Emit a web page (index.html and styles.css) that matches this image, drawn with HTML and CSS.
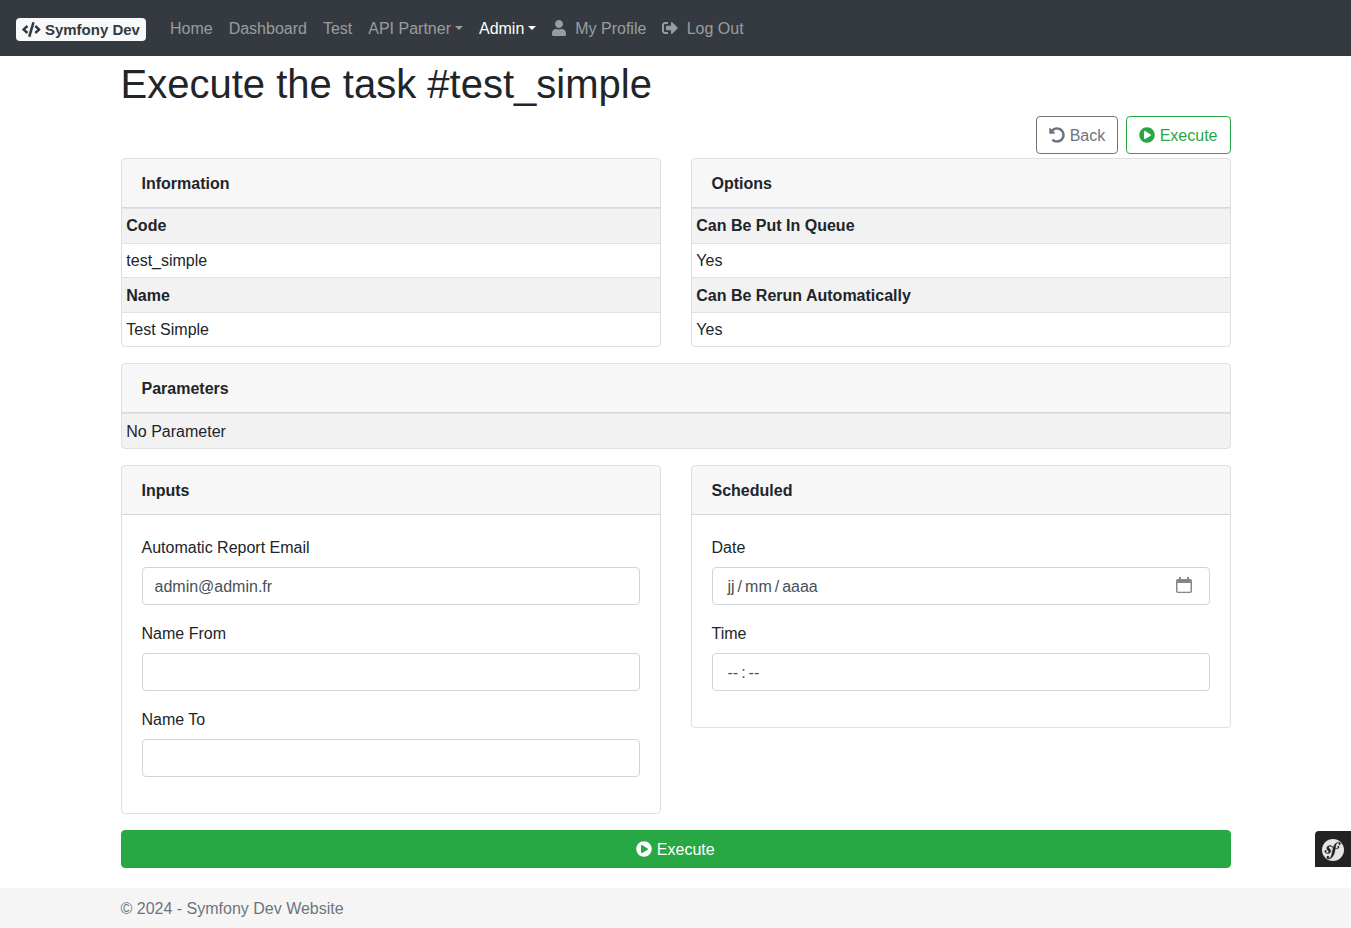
FILE: index.html
```html
<!DOCTYPE html>
<html lang="en">
<head>
<meta charset="utf-8">
<title>Execute the task #test_simple</title>
<link rel="stylesheet" href="styles.css">
</head>
<body>
<svg class="defs" width="0" height="0">
  <symbol id="code" viewBox="0 0 640 512"><path d="M278.9 511.5l-61-17.7c-6.4-1.8-10-8.5-8.2-14.9L346.2 8.7c1.8-6.4 8.5-10 14.9-8.2l61 17.7c6.4 1.8 10 8.5 8.2 14.9L293.8 503.3c-1.9 6.4-8.5 10.1-14.9 8.2zm-114-112.2l43.5-46.4c4.6-4.9 4.3-12.7-.8-17.2L117 256l90.6-79.7c5.1-4.5 5.5-12.3.8-17.2l-43.5-46.4c-4.5-4.8-12.1-5.1-17-.5L3.8 247.2c-5.1 4.7-5.1 12.8 0 17.5l144.1 135.1c4.9 4.6 12.5 4.4 17-.5zm327.2.6l144.1-135.1c5.1-4.7 5.1-12.8 0-17.5L492.1 112.1c-4.8-4.5-12.4-4.3-17 .5L431.6 159c-4.6 4.9-4.3 12.7.8 17.2L523 256l-90.6 79.7c-5.1 4.5-5.5 12.3-.8 17.2l43.5 46.4c4.5 4.9 12.1 5.1 17 .6z"/></symbol>
  <symbol id="user" viewBox="0 0 448 512"><path d="M224 256c70.7 0 128-57.3 128-128S294.7 0 224 0 96 57.3 96 128s57.3 128 128 128zm89.6 32h-16.7c-22.2 10.2-46.9 16-72.9 16s-50.6-5.8-72.9-16h-16.7C60.2 288 0 348.2 0 422.4V464c0 26.5 21.5 48 48 48h352c26.5 0 48-21.5 48-48v-41.6c0-74.2-60.2-134.4-134.4-134.4z"/></symbol>
  <symbol id="logout" viewBox="0 0 512 512"><path d="M497 273L329 441c-15 15-41 4.500-41-17v-96H152c-13.300 0-24-10.700-24-24v-96c0-13.300 10.700-24 24-24h136V88c0-21.400 25.900-32 41-17l168 168c9.300 9.400 9.300 24.600 0 34zM192 436v-40c0-6.600-5.400-12-12-12H96c-17.700 0-32-14.300-32-32V160c0-17.700 14.300-32 32-32h84c6.600 0 12-5.400 12-12V76c0-6.600-5.400-12-12-12H96c-53 0-96 43-96 96v192c0 53 43 96 96 96h84c6.600 0 12-5.400 12-12z"/></symbol>
  <symbol id="play" viewBox="0 0 512 512"><path d="M256 8C119 8 8 119 8 256s111 248 248 248 248-111 248-248S393 8 256 8zm115.7 272l-176 101c-15.8 8.8-35.7-2.5-35.7-21V152c0-18.4 19.8-29.8 35.7-21l176 107c16.4 9.2 16.4 32.9 0 42z"/></symbol>
  <symbol id="undo" viewBox="0 0 512 512"><path d="M255.545 8c-66.269.119-126.438 26.233-170.86 68.685L48.971 40.971C33.851 25.851 8 36.559 8 57.941V192c0 13.255 10.745 24 24 24h134.059c21.382 0 32.09-25.851 16.971-40.971l-41.75-41.75c30.864-28.899 70.801-44.907 113.23-45.273 92.398-.798 170.283 73.977 169.484 169.442C423.236 348.009 349.816 424 256 424c-41.127 0-79.997-14.678-110.63-41.556-4.743-4.161-11.906-3.908-16.368.553L89.34 422.659c-4.872 4.872-4.631 12.815.482 17.433C133.798 479.813 192.074 504 256 504c136.966 0 247.999-111.033 248-247.998C504.001 119.193 392.354 7.755 255.545 8z"/></symbol>
</svg>
<nav class="navbar">
  <a class="brand"><span class="badge"><svg class="icon icon-code"><use href="#code"/></svg> Symfony Dev</span></a>
  <a class="nav-link">Home</a>
  <a class="nav-link">Dashboard</a>
  <a class="nav-link">Test</a>
  <a class="nav-link dropdown">API Partner</a>
  <a class="nav-link dropdown active">Admin</a>
  <a class="nav-link"><svg class="icon icon-user"><use href="#user"/></svg>&nbsp; My Profile</a>
  <a class="nav-link"><svg class="icon icon-logout"><use href="#logout"/></svg>&nbsp; Log Out</a>
</nav>
<main class="container">
  <h1>Execute the task #test_simple</h1>
  <div class="actions">
    <a class="btn btn-secondary"><svg class="icon"><use href="#undo"/></svg> Back</a>
    <a class="btn btn-success"><svg class="icon"><use href="#play"/></svg> Execute</a>
  </div>
  <div class="row">
    <section class="card">
      <div class="card-header">Information</div>
      <table><tr><th>Code</th></tr><tr class="low"><td>test_simple</td></tr><tr class="low"><th>Name</th></tr><tr><td>Test Simple</td></tr></table>
    </section>
    <section class="card">
      <div class="card-header">Options</div>
      <table><tr><th>Can Be Put In Queue</th></tr><tr class="low"><td>Yes</td></tr><tr class="low"><th>Can Be Rerun Automatically</th></tr><tr><td>Yes</td></tr></table>
    </section>
  </div>
  <div class="row">
    <section class="card">
      <div class="card-header">Parameters</div>
      <table><tr class="low"><td>No Parameter</td></tr></table>
    </section>
  </div>
  <div class="row">
    <section class="card">
      <div class="card-header">Inputs</div>
      <div class="card-body">
        <label>Automatic Report Email</label><input class="control" type="text" value="admin@admin.fr">
        <label>Name From</label><input class="control" type="text">
        <label>Name To</label><input class="control" type="text">
      </div>
    </section>
    <section class="card">
      <div class="card-header">Scheduled</div>
      <div class="card-body">
        <label>Date</label>
        <div class="control picker"><span>jj</span><i>/</i><span>mm</span><i>/</i><span>aaaa</span>
          <svg class="calendar" viewBox="0 0 16 16"><path fill-rule="evenodd" d="M3 0h2v2h6V0h2v2h1.200A1.800 1.800 0 0 1 16 3.800V14.200A1.800 1.800 0 0 1 14.200 16H1.800A1.800 1.800 0 0 1 0 14.200V3.800A1.800 1.800 0 0 1 1.800 2H3zM1.500 6V14q0 .7.7.7H13.800q.7 0 .7-.7V6z"/></svg>
        </div>
        <label>Time</label>
        <div class="control picker"><span>--</span><i>:</i><span>--</span></div>
      </div>
    </section>
  </div>
  <button class="btn btn-block"><svg class="icon"><use href="#play"/></svg> Execute</button>
</main>
<footer><div class="footer-inner">© 2024 - Symfony Dev Website</div></footer>
<a class="toolbar"><svg viewBox="0 0 24 24"><circle cx="12" cy="12" r="12"/><path class="mark" transform="translate(-1.600 -1.600) scale(1.130)" d="M17.247 4.439c-1.22.042-2.283.715-3.075 1.644-.878 1.020-1.461 2.229-1.881 3.461-.753-.614-1.332-1.414-2.539-1.761-.966-.297-2.015-.105-2.813.514-.41.319-.71.757-.861 1.254-.36 1.176.381 2.225.719 2.6l.737.79c.15.154.519.56.339 1.138-.193.631-.951 1.037-1.732.799-.348-.106-.848-.366-.734-.73.045-.15.152-.263.21-.391.052-.11.077-.194.095-.242.141-.465-.053-1.070-.551-1.223-.465-.143-.939-.03-1.125.566-.209.68.117 1.913 1.86 2.449 2.040.628 3.765-.484 4.009-1.932.153-.907-.255-1.582-1.006-2.447l-.612-.677c-.371-.37-.497-1.002-.114-1.485.324-.409.785-.584 1.539-.379 1.103.3 1.594 1.063 2.412 1.680-.338 1.110-.56 2.223-.759 3.222l-.123.746c-.585 3.070-1.033 4.757-2.194 5.726-.234.166-.57.416-1.073.434-.266.005-.352-.176-.355-.257-.006-.184.15-.271.255-.353.154-.083.39-.224.372-.674-.016-.532-.456-.994-1.094-.973-.477.017-1.203.465-1.176 1.286.028.85.819 1.485 2.012 1.444.638-.021 2.062-.281 3.464-1.949 1.633-1.911 2.090-4.101 2.434-5.706l.383-2.116c.213.024.441.042.69.048 2.032.044 3.049-1.010 3.064-1.776.01-.464-.304-.921-.744-.91-.386.009-.718.278-.806.654-.094.428.646.813.068 1.189-.41.266-1.146.452-2.184.3l.188-1.042c.386-1.976.859-4.407 2.661-4.467.132-.007.612.006.623.323.003.105-.022.134-.147.375-.115.155-.174.345-.168.537.017.504.4.836.957.816.743-.023.955-.748.945-1.119-.032-.874-.952-1.424-2.170-1.386z"/></svg></a>
</body>
</html>
```
FILE: styles.css
```css
* { box-sizing: border-box; }
body { margin: 0; min-height: 928px; display: flex; flex-direction: column; background: #fff; color: #212529; font: 16px/24px "Liberation Sans", Arial, sans-serif; }
.defs { position: absolute; }
.icon { width: 16px; height: 16px; fill: currentColor; vertical-align: -2px; overflow: visible; }
.icon-user { width: 14px; }
.icon-logout { margin-right: -0.6px; }
.icon-code { width: 18.75px; height: 15px; vertical-align: -1.9px; }
.navbar { display: flex; align-items: center; height: 56px; padding: 8px 16px; background: #343a40; }
.brand { margin-right: 16px; padding: 5px 0; font-size: 20px; line-height: 30px; white-space: nowrap; }
.badge { display: inline-block; padding: 3.75px 6px; border-radius: 4px; background: #f8f9fa; color: #343a40; font-size: 15px; font-weight: 700; line-height: 1; vertical-align: baseline; }
.nav-link { padding: 9px 8px 7px; color: rgba(255,255,255,.5); white-space: nowrap; }
.nav-link.active { color: #fff; }
.dropdown::after { content: ""; display: inline-block; margin-left: 4px; vertical-align: 4px; border-top: 4.8px solid; border-right: 4.8px solid transparent; border-left: 4.8px solid transparent; }
.container { width: 1140px; margin: 0 auto; padding: 4px 15px 0; }
h1 { margin: 0 0 8px; font-size: 40px; font-weight: 400; line-height: 48px; }
.actions { display: flex; justify-content: flex-end; gap: 8px; margin-bottom: 4px; }
.btn { padding: 7px 12px 5px; border: 1px solid; border-radius: 4px; background: #fff; font: inherit; text-align: center; }
.btn-secondary { color: #6c757d; }
.btn-success { color: #28a745; }
.btn-block { display: block; width: 100%; border-color: #28a745; background: #28a745; color: #fff; }
.row { display: flex; align-items: flex-start; gap: 30px; margin-bottom: 16px; }
.card { flex: 1 1 0; border: 1px solid rgba(0,0,0,.125); border-radius: 4px; overflow: hidden; }
.card-header { padding: 13px 20px 11px; border-bottom: 1px solid rgba(0,0,0,.125); background: rgba(0,0,0,.03); font-weight: 700; }
table { width: 100%; border-collapse: collapse; }
th, td { padding: 4.8px; border-top: 1px solid #dee2e6; text-align: left; }
.low > * { padding-top: 5.6px; padding-bottom: 4px; }
tr:nth-child(odd) { background: rgba(0,0,0,.05); }
.card-body { padding: 20px; }
label { display: block; padding-top: 1px; margin-bottom: 7px; }
.control { display: block; width: 100%; height: 38px; margin-bottom: 16px; padding: 7px 12px 5px; border: 1px solid #ced4da; border-radius: 4px; background: #fff; color: #495057; font: inherit; }
.picker { display: flex; align-items: center; padding: 7px 15px 5px 14px; }
.picker span { padding: 0 1px; }
.picker i { padding: 0 2px; font-style: normal; }
.calendar { width: 16px; height: 16px; margin: -4px 2px 0 auto; fill: #84888c; }
footer { height: 40px; margin-top: auto; padding-top: 1px; background: #f5f5f5; color: #6c757d; line-height: 40px; }
.footer-inner { width: 1140px; margin: 0 auto; padding: 0 15px; }
.toolbar { position: fixed; right: 0; bottom: 61px; display: flex; align-items: center; justify-content: center; width: 36px; height: 36px; padding-top: 2px; border-top-left-radius: 4px; background: #222; }
.toolbar svg { width: 22px; height: 22px; fill: #e5e5e5; }
.toolbar .mark { fill: #222; stroke: #222; stroke-width: .3; }
```
